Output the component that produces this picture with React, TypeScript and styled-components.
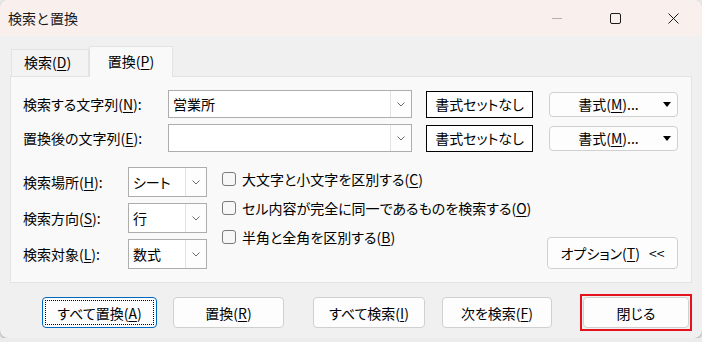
import * as React from 'react';
import styled, { createGlobalStyle } from 'styled-components';

const GlobalStyle = createGlobalStyle`
  html, body {
    margin: 0;
    padding: 0;
    background: #ececec;
  }
  body {
    font-family: "Noto Sans CJK JP", "Noto Sans", sans-serif;
    font-size: 14px;
    font-feature-settings: "palt";
    color: #000;
  }
`;

const Window = styled.div`
  width: 702px;
  height: 338px;
  display: flex;
  flex-direction: column;
  background: #f0f0f0;
  border-radius: 8px;
  overflow: hidden;
  box-shadow: 0 1px 3px rgba(0, 0, 0, 0.35);
`;

const TitleBar = styled.div`
  height: 36px;
  flex: none;
  display: flex;
  align-items: center;
  background: #f9f0ee;
`;

const Title = styled.div`
  flex: 1;
  padding-left: 8px;
  font-size: 14px;
  line-height: 20px;
  color: #1a1a1a;
  font-feature-settings: normal;
`;

const Controls = styled.div`
  display: flex;
  height: 100%;
`;

const ControlButton = styled.div`
  width: 58px;
  height: 100%;
  display: flex;
  align-items: center;
  justify-content: center;
`;

const Body = styled.div`
  flex: 1;
  padding: 10px 10px 0 10px;
  display: flex;
  flex-direction: column;
`;

const TabStrip = styled.div`
  display: flex;
  align-items: flex-end;
  height: 30px;
  padding-left: 1px;
`;

const Tab = styled.div<{ $active?: boolean }>`
  position: relative;
  z-index: ${p => (p.$active ? 1 : 0)};
  width: ${p => (p.$active ? '84px' : '78px')};
  height: ${p => (p.$active ? '31px' : '28px')};
  margin-bottom: -1px;
  box-sizing: border-box;
  display: flex;
  align-items: center;
  justify-content: ${p => (p.$active ? 'center' : 'flex-start')};
  padding-left: ${p => (p.$active ? '0' : '12px')};
  padding-bottom: 2px;
  background: ${p => (p.$active ? '#f9f9f9' : '#f3f3f3')};
  border: 1px solid #e3e3e3;
  border-bottom: ${p => (p.$active ? 'none' : '1px solid #e3e3e3')};
  line-height: 20px;
`;

const Panel = styled.div`
  height: 207px;
  box-sizing: border-box;
  background: #f9f9f9;
  border: 1px solid #e3e3e3;
  padding: 13px 12px 13px 12px;
  display: flex;
  flex-direction: column;
`;

const FieldRow = styled.div`
  display: flex;
  align-items: center;
  height: 28px;
  & + & {
    margin-top: 6px;
  }
`;

const Label = styled.div<{ $width: number }>`
  width: ${p => p.$width}px;
  flex: none;
  line-height: 20px;
  white-space: nowrap;
`;

const Combo = styled.div<{ $width: number; $height: number }>`
  width: ${p => p.$width}px;
  height: ${p => p.$height}px;
  flex: none;
  box-sizing: border-box;
  display: flex;
  background: #fff;
  border: 1px solid #adadad;
`;

const ComboText = styled.div`
  flex: 1;
  padding-left: 4px;
  display: flex;
  align-items: center;
  line-height: 20px;
`;

const ComboArrow = styled.div`
  width: 20px;
  flex: none;
  display: flex;
  align-items: center;
  justify-content: center;
  border-left: 1px solid #e3e3e3;
  background: #fdfdfd;
`;

const FormatNone = styled.div`
  width: 107px;
  height: 27px;
  margin-left: 14px;
  box-sizing: border-box;
  display: flex;
  align-items: center;
  justify-content: center;
  background: #fff;
  border: 1px solid #000;
  line-height: 20px;
`;

const DropButton = styled.div`
  width: 129px;
  height: 25px;
  margin-left: 16px;
  box-sizing: border-box;
  display: flex;
  align-items: center;
  padding: 0 6px 0 0;
  background: #fdfdfd;
  border: 1px solid #d0d0d0;
  border-radius: 4px;
  line-height: 20px;
`;

const DropLabel = styled.span`
  flex: 1;
  text-align: center;
  padding-left: 4px;
`;

const OptionsArea = styled.div`
  margin-top: 15px;
  display: flex;
`;

const SelectColumn = styled.div`
  display: flex;
  flex-direction: column;
  gap: 6px;
`;

const SelectRow = styled.div`
  display: flex;
  align-items: center;
  height: 30px;
`;

const CheckColumn = styled.div`
  margin-left: 15px;
  padding-top: 1px;
  display: flex;
  flex-direction: column;
  gap: 7px;
`;

const CheckRow = styled.label`
  display: flex;
  align-items: center;
  height: 22px;
  line-height: 20px;
  white-space: nowrap;
`;

const CheckBox = styled.span`
  width: 14px;
  height: 14px;
  box-sizing: border-box;
  margin-right: 6px;
  border: 1px solid #7a7a7a;
  border-radius: 3px;
  background: #f7f7f7;
`;

const OptionsButtonWrap = styled.div`
  flex: 1;
  display: flex;
  justify-content: flex-end;
  align-items: flex-end;
  padding-right: 1px;
`;

const Button = styled.div<{ $width: number; $focused?: boolean }>`
  position: relative;
  width: ${p => p.$width}px;
  height: 31px;
  box-sizing: border-box;
  display: flex;
  align-items: center;
  justify-content: center;
  background: #fdfdfd;
  border: 1px solid ${p => (p.$focused ? '#0067c0' : '#d0d0d0')};
  border-radius: 4px;
  line-height: 20px;
  white-space: nowrap;
  ${p =>
    p.$focused &&
    `&::after {
      content: '';
      position: absolute;
      inset: 2px;
      border: 1px dotted #000;
    }`}
`;

const OptionsButton = styled(Button)`
  height: 32px;
`;

const Arrows = styled.span`
  margin-left: 9px;
`;

const ButtonBar = styled.div`
  display: flex;
  align-items: center;
  height: 37px;
  margin-top: 11px;
  padding-left: 32px;
`;

const Slot = styled.div<{ $gap: number }>`
  margin-left: ${p => p.$gap}px;
  &:first-child {
    margin-left: 0;
  }
`;

const Highlight = styled.div`
  padding: 1px;
  border: 2px solid #e3121c;
`;

const Key = styled.u`
  text-underline-offset: 2px;
`;

const Chevron = () => (
  <svg width="8" height="5" viewBox="0 0 8 5">
    <path d="M0.5 0.5 L4 4 L7.5 0.5" fill="none" stroke="#6b6b6b" strokeWidth="1" />
  </svg>
);

const Caret = () => (
  <svg width="8" height="5" viewBox="0 0 8 5">
    <path d="M0 0 H8 L4 5 Z" fill="#000" />
  </svg>
);

const Field: React.FC<{ label: React.ReactNode; value?: string }> = ({ label, value }) => (
  <FieldRow>
    <Label $width={145}>{label}</Label>
    <Combo $width={244} $height={28}>
      <ComboText>{value}</ComboText>
      <ComboArrow><Chevron /></ComboArrow>
    </Combo>
    <FormatNone>書式セットなし</FormatNone>
    <DropButton>
      <DropLabel>書式(<Key>M</Key>)...</DropLabel>
      <Caret />
    </DropButton>
  </FieldRow>
);

const Select: React.FC<{ label: React.ReactNode; value: string }> = ({ label, value }) => (
  <SelectRow>
    <Label $width={105}>{label}</Label>
    <Combo $width={79} $height={30}>
      <ComboText>{value}</ComboText>
      <ComboArrow><Chevron /></ComboArrow>
    </Combo>
  </SelectRow>
);

const Check: React.FC<{ children: React.ReactNode }> = ({ children }) => (
  <CheckRow>
    <CheckBox />
    {children}
  </CheckRow>
);

const App: React.FC = () => (
  <>
    <GlobalStyle />
    <Window>
      <TitleBar>
        <Title>検索と置換</Title>
        <Controls>
          <ControlButton>
            <svg width="10" height="10" viewBox="0 0 10 10">
              <path d="M0 5.5 H10" stroke="#b5b0af" strokeWidth="1" />
            </svg>
          </ControlButton>
          <ControlButton>
            <svg width="11" height="11" viewBox="0 0 11 11">
              <rect x="0.5" y="0.5" width="10" height="10" rx="1.5" fill="none" stroke="#1a1a1a" strokeWidth="1" />
            </svg>
          </ControlButton>
          <ControlButton>
            <svg width="11" height="11" viewBox="0 0 11 11">
              <path d="M0.5 0.5 L10.5 10.5 M10.5 0.5 L0.5 10.5" stroke="#1a1a1a" strokeWidth="1" />
            </svg>
          </ControlButton>
        </Controls>
      </TitleBar>
      <Body>
        <TabStrip>
          <Tab>検索(<Key>D</Key>)</Tab>
          <Tab $active>置換(<Key>P</Key>)</Tab>
        </TabStrip>
        <Panel>
          <Field label={<>検索する文字列(<Key>N</Key>):</>} value="営業所" />
          <Field label={<>置換後の文字列(<Key>E</Key>):</>} />
          <OptionsArea>
            <SelectColumn>
              <Select label={<>検索場所(<Key>H</Key>):</>} value="シート" />
              <Select label={<>検索方向(<Key>S</Key>):</>} value="行" />
              <Select label={<>検索対象(<Key>L</Key>):</>} value="数式" />
            </SelectColumn>
            <CheckColumn>
              <Check>大文字と小文字を区別する(<Key>C</Key>)</Check>
              <Check>セル内容が完全に同一であるものを検索する(<Key>O</Key>)</Check>
              <Check>半角と全角を区別する(<Key>B</Key>)</Check>
            </CheckColumn>
            <OptionsButtonWrap>
              <OptionsButton $width={131}>オプション(<Key>T</Key>)<Arrows>&lt;&lt;</Arrows></OptionsButton>
            </OptionsButtonWrap>
          </OptionsArea>
        </Panel>
        <ButtonBar>
          <Slot $gap={0}><Button $width={115} $focused>すべて置換(<Key>A</Key>)</Button></Slot>
          <Slot $gap={16}><Button $width={111}>置換(<Key>R</Key>)</Button></Slot>
          <Slot $gap={29}><Button $width={112}>すべて検索(<Key>I</Key>)</Button></Slot>
          <Slot $gap={17}><Button $width={110}>次を検索(<Key>F</Key>)</Button></Slot>
          <Slot $gap={28}>
            <Highlight><Button $width={106}>閉じる</Button></Highlight>
          </Slot>
        </ButtonBar>
      </Body>
    </Window>
  </>
);

export default App;
